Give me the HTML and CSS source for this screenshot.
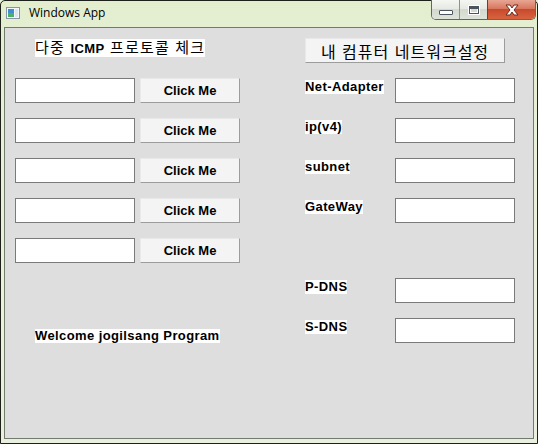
FILE: index.html
```html
<!DOCTYPE html>
<html lang="ko">
<head>
<meta charset="utf-8">
<title>Windows App</title>
<link rel="stylesheet" href="styles.css">
</head>
<body>
<div class="window">
  <div class="titlebar">
    <svg class="app-icon" width="14" height="12" viewBox="0 0 14 12">
      <rect x="0.5" y="0.5" width="13" height="11" fill="#f4f7fb" stroke="#8a96a8"/>
      <rect x="2" y="2" width="6" height="8" fill="#3f8fd0"/>
      <rect x="2" y="6" width="6" height="4" fill="#4cb06a"/>
      <rect x="9" y="2" width="3" height="8" fill="#dfe6ee"/>
    </svg>
    <span class="title">Windows App</span>
    <div class="caption-buttons">
      <div class="cap cap-min"><span class="glyph-min"></span></div>
      <div class="cap cap-max"><span class="glyph-max"></span></div>
      <div class="cap cap-close">
        <svg width="16" height="12" viewBox="0 0 16 12">
          <path d="M2 1 L6 1 L8 4 L10 1 L14 1 L10 6 L14 11 L10 11 L8 8 L6 11 L2 11 L6 6 Z" fill="#fff" stroke="#6b2a1c" stroke-width="1" stroke-linejoin="round"/>
        </svg>
      </div>
    </div>
  </div>
  <div class="client">
    <div class="form">
      <div class="head-left"><span class="label kr">다중 <b>ICMP</b> 프로토콜 체크</span></div>
      <div class="head-right"><button class="btn btn-kr">내 컴퓨터 네트워크설정</button></div>

      <input class="edit c1 r1" type="text">
      <button class="btn c2 r1">Click Me</button>
      <span class="label c3 r1">Net-Adapter</span>
      <input class="edit c4 r1" type="text">

      <input class="edit c1 r2" type="text">
      <button class="btn c2 r2">Click Me</button>
      <span class="label c3 r2">ip(v4)</span>
      <input class="edit c4 r2" type="text">

      <input class="edit c1 r3" type="text">
      <button class="btn c2 r3">Click Me</button>
      <span class="label c3 r3">subnet</span>
      <input class="edit c4 r3" type="text">

      <input class="edit c1 r4" type="text">
      <button class="btn c2 r4">Click Me</button>
      <span class="label c3 r4">GateWay</span>
      <input class="edit c4 r4" type="text">

      <input class="edit c1 r5" type="text">
      <button class="btn c2 r5">Click Me</button>

      <span class="label c3 r6">P-DNS</span>
      <input class="edit c4 r6" type="text">

      <div class="welcome r7"><span class="label">Welcome jogilsang Program</span></div>
      <span class="label c3 r7">S-DNS</span>
      <input class="edit c4 r7" type="text">
    </div>
  </div>
</div>
</body>
</html>
```

FILE: styles.css
```css
html, body {
  margin: 0;
  padding: 0;
  background: #e6efd8;
}

.window {
  width: 538px;
  height: 444px;
  box-sizing: border-box;
  border: 1px solid #1d2119;
  border-radius: 5px 5px 0 0;
  background: linear-gradient(180deg, #e3eecf 0%, #e9f1dc 40%, #eaf0e0 100%);
  padding: 0 3px 4px 3px;
  display: flex;
  flex-direction: column;
  font-family: "Liberation Sans", Arial, sans-serif;
}

.titlebar {
  height: 25px;
  display: flex;
  align-items: flex-start;
  position: relative;
}

.app-icon {
  margin: 6px 0 0 2px;
}

.title {
  margin: 4px 0 0 9px;
  font-family: "Open Sans", "Noto Sans", sans-serif;
  font-size: 12px;
  line-height: 16px;
  color: #000;
}

.caption-buttons {
  position: absolute;
  top: -1px;
  right: -2px;
  display: flex;
  height: 19px;
  border: 1px solid #5f6a5a;
  border-top: none;
  border-radius: 0 0 5px 5px;
  overflow: hidden;
}

.cap {
  height: 19px;
  display: flex;
  align-items: center;
  justify-content: center;
  box-sizing: border-box;
}

.cap-min, .cap-max {
  width: 28px;
  background: linear-gradient(180deg, #f4f6f2 0%, #e6eae3 45%, #d3d9cf 50%, #dfe4db 100%);
}

.cap-min {
  border-right: 1px solid #8c9488;
}

.cap-max {
  border-right: 1px solid #7a3a28;
}

.glyph-min {
  width: 12px;
  height: 3px;
  background: #fff;
  border: 1px solid #4b5560;
  border-radius: 1px;
  margin-top: 5px;
}

.glyph-max {
  width: 8px;
  height: 6px;
  border: 1px solid #4b5560;
  outline: 1px solid #fff;
  background: transparent;
  box-shadow: inset 0 2px 0 #4b5560, inset 0 0 0 1px #fff;
}

.cap-close {
  width: 47px;
  background: linear-gradient(180deg, #e8a694 0%, #d9765e 45%, #c84a2c 50%, #d8643f 100%);
}

.client {
  flex: 1;
  margin-top: 1px;
  border: 1px solid #737c6c;
  background: #dedede;
  box-sizing: border-box;
}

.form {
  display: grid;
  grid-template-columns: 125px 165px 90px 120px;
  grid-template-rows: repeat(8, 25px);
  row-gap: 15px;
  padding: 10px 0 0 10px;
}

.head-left { grid-column: 1 / 3; grid-row: 1; padding-left: 20px; }
.head-right { grid-column: 3 / 5; grid-row: 1; }

.c1 { grid-column: 1; }
.c2 { grid-column: 2; }
.c3 { grid-column: 3; }
.c4 { grid-column: 4; }
.r1 { grid-row: 2; }
.r2 { grid-row: 3; }
.r3 { grid-row: 4; }
.r4 { grid-row: 5; }
.r5 { grid-row: 6; }
.r6 { grid-row: 7; }
.r7 { grid-row: 8; }

.welcome {
  grid-column: 1 / 3;
  padding: 8px 0 0 20px;
}

.label {
  align-self: start;
  justify-self: start;
  display: inline-block;
  background: #fff;
  color: #000;
  font-weight: bold;
  font-size: 13px;
  line-height: 14px;
  letter-spacing: 0.4px;
  margin-top: 2px;
}

.label.kr {
  font-family: "Noto Sans CJK KR", sans-serif;
  font-weight: normal;
  font-size: 15px;
  line-height: 16px;
  letter-spacing: 1.2px;
  margin-top: 1px;
}

.label.kr b {
  font-family: "Liberation Sans", Arial, sans-serif;
  font-weight: bold;
  font-size: 13px;
  letter-spacing: 0.4px;
}

.edit {
  width: 120px;
  height: 25px;
  box-sizing: border-box;
  border: 1px solid #7a7a7a;
  background: #fff;
  margin: 0;
  padding: 0 3px;
  outline: none;
}

.btn {
  width: 100px;
  height: 25px;
  box-sizing: border-box;
  margin: 0;
  padding: 0;
  border: 1px solid;
  border-color: #e9e9e9 #9c9c9c #9c9c9c #e9e9e9;
  background: #f4f4f4;
  font-family: "Liberation Sans", Arial, sans-serif;
  font-weight: bold;
  font-size: 13px;
  color: #000;
}

.btn-kr {
  width: 200px;
  font-family: "Noto Sans CJK KR", sans-serif;
  font-weight: normal;
  font-size: 16px;
  letter-spacing: 1px;
  line-height: 20px;
}
```
